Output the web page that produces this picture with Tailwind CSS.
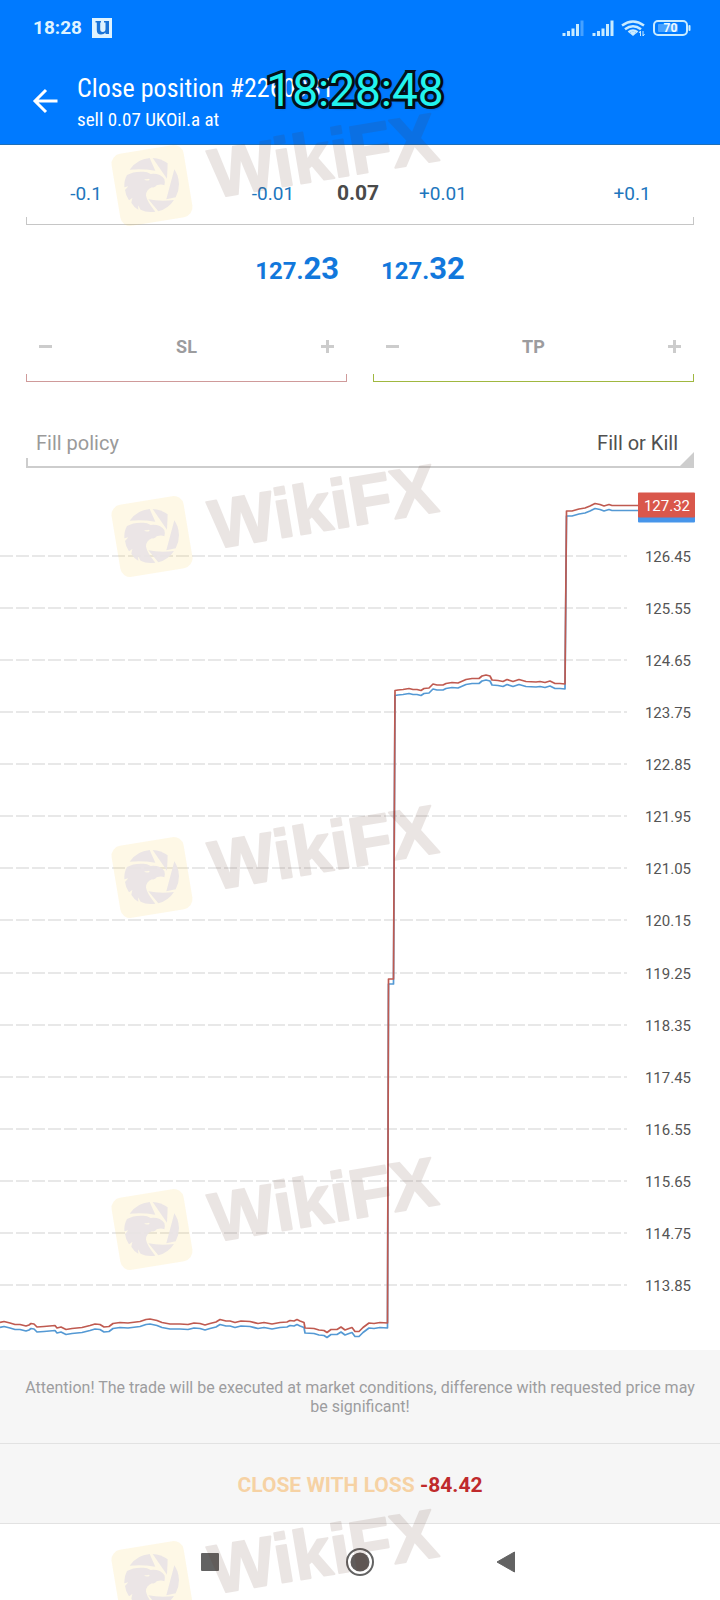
<!DOCTYPE html>
<html lang="en">
<head>
    <meta charset="UTF-8">
    <meta name="viewport" content="width=device-width, initial-scale=1.0">
    <title>Close position</title>

    <!-- Tailwind css -->
    <script src="https://cdn.jsdelivr.net/npm/@tailwindcss/browser@4"></script>
</head>

<body class="relative min-h-screen overflow-x-hidden bg-white font-['Roboto',sans-serif]">

    <!-- Header -->
    <header class="relative h-[145px] bg-[#007aff] border-b border-[#1f6fb8] text-white">

        <!-- Status bar -->
        <div class="flex items-center justify-between h-14 pl-[33px] pr-7 text-[#dff3ff]">
            <div class="flex items-center gap-[10px]">
                <span class="text-[19px] font-bold">18:28</span>
                <svg class="w-5 h-5" viewBox="0 0 20 20">
                    <rect width="20" height="20" fill="#dff3ff"/>
                    <path d="M3.500 3h5.500v1.500H8.200V11c0 2 .8 3 2.600 3s2.700-1 2.700-3V4.500H12V3h5v13h-3.500v-1.500Q12 16.500 9 16.500 4.800 16.500 4.800 12V4.500H3.500z" fill="#1a74d8"/>
                </svg>
            </div>
            <svg class="w-[132px] h-5" viewBox="0 0 132 20">
                <g stroke="#c9ebff" stroke-width="3">
                    <path d="M4 18v-3M8.500 18v-5M13 18v-7.500M17.500 18V6"/>
                    <path d="M22 18V2.500" opacity=".35"/>
                    <path d="M34 18v-3M38.500 18v-5M43 18v-7.500M47.500 18V6M52 18V2.500"/>
                </g>
                <g fill="none" stroke="#c9ebff" stroke-width="2.500">
                    <path d="M62 7.500q11-8 22 0M65 11.200q8-6 16 0M68.500 14.300q4.500-3.500 9 0"/>
                </g>
                <path d="M69.500 15q3.500-2.500 7 0L73 18z" fill="#c9ebff"/>
                <path d="M80.500 18v-5l-1.500 2M83 13v5l1.500-2" stroke="#c9ebff" fill="none"/>
                <rect x="94" y="3" width="33" height="14" rx="4" fill="none" stroke="#c9ebff" stroke-width="2"/>
                <rect x="98" y="6" width="20" height="8" rx="1" fill="#c9ebff" opacity=".35"/>
                <path d="M129.500 8v4" stroke="#c9ebff" stroke-width="2" stroke-linecap="round"/>
                <text x="110.500" y="14" text-anchor="middle" font-size="12" font-weight="700" fill="#eefaff">70</text>
            </svg>
        </div>

        <!-- Title -->
        <div class="flex items-center gap-[18px] pl-8 pt-3">
            <button aria-label="Back" class="flex">
                <svg class="w-[27px] h-7" viewBox="0 0 27 28" fill="none" stroke="#fff" stroke-width="3">
                    <path d="M25.500 14H3M14 3 3 14l11 11"/>
                </svg>
            </button>
            <div class="pt-0.5 font-['Roboto_Condensed','Roboto',sans-serif]">
                <h1 class="text-[26px] leading-9">Close position #2260931</h1>
                <p class="text-[19px] leading-7">sell 0.07 UKOil.a at</p>
            </div>
        </div>

        <!-- Clock overlay -->
        <div class="absolute inset-x-0 top-16 pr-2.5 text-center text-[46px] leading-[52px] text-[#22f3ee] [-webkit-text-stroke:6px_#06121c] [paint-order:stroke_fill] [text-shadow:2px_2px_3px_#0008]">18:28:48</div>
    </header>

    <main>
        <!-- Volume -->
        <div class="relative flex items-center mx-[26px] h-20 pt-[18px] text-[19px] text-[#2076bd]">
            <button class="w-30">-0.1</button>
            <button class="w-[86px] ml-auto">-0.01</button>
            <input aria-label="Volume" value="0.07" class="w-[84px] text-center text-[21px] font-bold text-[#4a4a4a] outline-none">
            <button class="w-[86px] mr-auto">+0.01</button>
            <button class="w-[124px]">+0.1</button>
            <div class="absolute inset-x-0 bottom-0 h-2 border-x border-b border-[#c6c6c6]"></div>
        </div>

        <!-- Bid and ask -->
        <div class="flex justify-center gap-[42px] h-[90px] pt-6 font-bold leading-10 text-[#1278dc]">
            <p class="text-2xl leading-10">127.<span class="text-[31px]">23</span></p>
            <p class="text-2xl leading-10">127.<span class="text-[31px]">32</span></p>
        </div>

        <!-- Stop loss and take profit -->
        <div class="flex gap-[26px] mx-[26px]">
            <div class="relative flex flex-1 items-center h-[67px] px-3 pb-1">
                <button aria-label="Decrease stop loss"><svg class="w-[15px] h-[15px]" viewBox="0 0 15 15"><path d="M1 7.500h13" stroke="#ccc" stroke-width="3"/></svg></button>
                <input aria-label="Stop loss" placeholder="SL" class="flex-1 min-w-0 text-center text-lg font-bold placeholder:text-[#9c9c9e] outline-none">
                <button aria-label="Increase stop loss"><svg class="w-[15px] h-[15px]" viewBox="0 0 15 15"><path d="M1 7.500h13M7.500 1v13" stroke="#ccc" stroke-width="3"/></svg></button>
                <div class="absolute inset-x-0 bottom-0 h-2 border-x border-b border-[#cf9a9a]"></div>
            </div>
            <div class="relative flex flex-1 items-center h-[67px] px-3 pb-1">
                <button aria-label="Decrease take profit"><svg class="w-[15px] h-[15px]" viewBox="0 0 15 15"><path d="M1 7.500h13" stroke="#ccc" stroke-width="3"/></svg></button>
                <input aria-label="Take profit" placeholder="TP" class="flex-1 min-w-0 text-center text-lg font-bold placeholder:text-[#9c9c9e] outline-none">
                <button aria-label="Increase take profit"><svg class="w-[15px] h-[15px]" viewBox="0 0 15 15"><path d="M1 7.500h13M7.500 1v13" stroke="#ccc" stroke-width="3"/></svg></button>
                <div class="absolute inset-x-0 bottom-0 h-2 border-x border-b border-[#a0b840]"></div>
            </div>
        </div>

        <!-- Fill policy -->
        <div class="relative flex items-center justify-between mx-[26px] mt-9 h-[50px] pl-[10px] pr-4 text-xl">
            <label for="fill_policy" class="text-[#9a9a9a]">Fill policy</label>
            <select id="fill_policy" class="appearance-none text-right [text-align-last:right] text-[#505050] outline-none">
                <option>Fill or Kill</option>
            </select>
            <div class="absolute inset-x-0 bottom-0 h-[10px] border-l-2 border-b-2 border-[#cdcdcd] pointer-events-none"></div>
            <svg class="absolute right-0 bottom-0 w-4 h-4 pointer-events-none" viewBox="0 0 16 16"><path d="M16 0v16H0z" fill="#cdcdcd"/></svg>
        </div>

        <!-- Tick chart -->
        <svg class="block w-full mt-1.5" viewBox="0 474 720 876">
            <g id="grid" stroke="#e8e8e8" stroke-width="2" stroke-dasharray="13 3"></g>
            <g id="labels" fill="#555" font-size="15" text-anchor="end"></g>

            <defs>
                <path id="tick_line" d="M0 1322.500 4 1321.500 10 1323 15 1324.500 20 1324.500 26 1326 29 1325 31 1323.500 34 1324 37 1327 44 1326.500 55 1325.500 57 1328 61 1327 66 1329.500 72 1328.500 82 1327.500 90 1325.500 95 1324 100 1324.500 104 1327 109 1326.500 113 1323.500 120 1322.500 128 1323 140 1321.500 146 1319.500 150 1319 157 1320.500 162 1322.500 170 1324 180 1324 188 1324.500 194 1323 200 1323.500 205 1325 210 1323.500 216 1322 220 1319.500 226 1321 230 1321 235 1322.500 241 1321 250 1321.500 258 1323.500 264 1322.500 272 1324 280 1322.500 287 1322 290 1320.500 294 1321 297 1319.500 300 1321 304 1322.500 305 1328 314 1328.500 319 1330 324 1330.500 327 1332.500 331 1329.500 337 1329.500 341 1327 345 1330 349 1328.500 352 1327.500 355 1331.500 359 1331.500 363 1327.500 369 1323 374 1323.500 380 1322.500 387.500 1323 388.500 979 393.500 979 395 690.500 398 690 403 689.500 409 688.500 413 689.500 417 689.500 421 690.500 424 688.500 429 688 433 684 437 685 443 685 446 683.500 452 682.500 458 683 466 679.500 472 678.500 479 678.500 482 676 486 675 490 676 492 680 498 680.500 503 681.500 507 679.500 513 681.500 519 679.500 526 681.500 536 682 540 681.500 545 682.500 550 681 555 683.500 560 683.500 565 684 566.500 511 572 511 579 509 585 508 590 506 595 503.500 600 504.500 604 506 609 504.500 612 505.500 640 505.500"/>
            </defs>
            <g fill="none" stroke-width="1.700" stroke-linejoin="round">
                <use href="#tick_line" y="5" stroke="#5499d4"/>
                <use href="#tick_line" stroke="#bf5a50"/>
            </g>

            <!-- Current price tags -->
            <rect x="638" y="498" width="57" height="24.500" rx="1" fill="#4795ea"/>
            <rect x="638" y="492.500" width="57" height="25" rx="1" fill="#d9574b"/>
            <text x="690" y="511" font-size="15" text-anchor="end" fill="#fff">127.32</text>
        </svg>
    </main>

    <!-- Footer -->
    <footer class="bg-[#f6f6f6]">
        <p class="h-[93px] pt-7 px-6 text-center text-base leading-[19px] text-[#9d9d9f]">Attention! The trade will be executed at market conditions, difference with requested price may be significant!</p>
        <button class="block w-full h-[81px] pt-1 border-y border-[#e2e2e2] text-[21px] font-bold text-[#f6d2a4]">CLOSE WITH LOSS <span class="text-[#bf2a2c]">-84.42</span></button>
    </footer>

    <!-- Android navigation -->
    <nav class="flex items-center justify-center gap-[118px] h-[76px]">
        <button aria-label="Recent apps"><svg class="w-8 h-8" viewBox="0 0 32 32"><rect x="7" y="7" width="18" height="18" rx="1" fill="#636363"/></svg></button>
        <button aria-label="Home"><svg class="w-8 h-8" viewBox="0 0 32 32"><circle cx="16" cy="16" r="13" fill="none" stroke="#636363" stroke-width="2"/><circle cx="16" cy="16" r="9.500" fill="#605c5b"/></svg></button>
        <button aria-label="Back"><svg class="w-8 h-8" viewBox="0 0 32 32"><path d="M3 16 20.500 6v20z" fill="#636363" stroke="#636363" stroke-linejoin="round"/></svg></button>
    </nav>

    <!-- Watermark -->
    <svg class="absolute top-0 left-0 w-full h-auto pointer-events-none" viewBox="0 0 720 1600" aria-hidden="true">
        <defs>
            <g id="wikifx">
                <rect x="115.500" y="500" width="73" height="73" rx="10" transform="rotate(-9.500 152 536.500)" fill="#f4cc40" opacity=".13"/>
                <g transform="translate(105 490) scale(.3333)" fill="#e9e4e6" opacity=".9">
                    <!-- aperture blades -->
                    <path d="M74 92A81 81 0 0 1 134 57L151 95Q110 88 74 92z"/>
                    <path d="M143 57A81 81 0 0 1 188 73L186 119z"/>
                    <path d="M208 91A81 81 0 0 1 212 175L184 181z"/>
                    <path d="M207 183A81 81 0 0 1 160 217L130 181Q165 188 207 183z"/>
                    <!-- eagle -->
                    <path d="M66 108Q85 97 112 98Q125 97 137 105Q165 102 178 120Q181 127 178 139Q169 134 155 139Q150 147 141 145Q122 153 123 170Q126 187 151 218Q125 222 107 212L99 199 100 212Q86 204 79 191L82 177 72 184Q62 170 60 153L70 142 58 145Q57 124 66 108zM117 120Q124 128 134 122L132 119 137 118Q125 122 117 120z" fill-rule="evenodd"/>
                </g>
                <g opacity=".12" fill="#5a3020" stroke="#5a3020" stroke-width="2" stroke-linejoin="round">
                    <text x="214" y="549" transform="rotate(-9.500 214 549)" font-family="Liberation Sans, sans-serif" font-weight="700" font-size="69">WikiFX</text>
                </g>
            </g>
        </defs>
        <use href="#wikifx" y="-351"/>
        <use href="#wikifx"/>
        <use href="#wikifx" y="341"/>
        <use href="#wikifx" y="693"/>
        <use href="#wikifx" y="1045"/>
    </svg>

    <!-- Price grid -->
    <script>
        const svgNS = 'http://www.w3.org/2000/svg';
        const grid = document.getElementById('grid');
        const labels = document.getElementById('labels');

        for (let i = 0; i < 15; i++) {
            const y = Math.round(556 + i * 52.07);

            const line = document.createElementNS(svgNS, 'path');
            line.setAttribute('d', `M0 ${y}H627`);
            grid.appendChild(line);

            const label = document.createElementNS(svgNS, 'text');
            label.setAttribute('x', 691);
            label.setAttribute('y', y + 6);
            label.textContent = (126.45 - i * 0.9).toFixed(2);
            labels.appendChild(label);
        }
    </script>
</body>
</html>
